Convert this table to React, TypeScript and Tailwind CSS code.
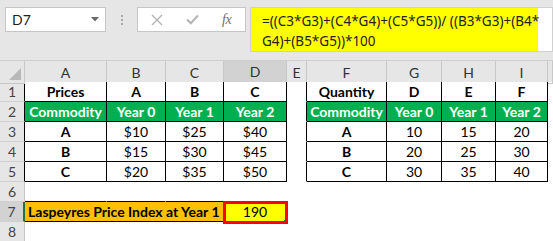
import React from 'react';

type Fill = 'green' | 'none';
type Cell = { text?: string; bold?: boolean; fill?: Fill };

const COLS = ['A', 'B', 'C', 'D', 'E', 'F', 'G', 'H', 'I', ''];

// sheet content, rows 1..8, columns A..I
const b = (text: string): Cell => ({ text, bold: true });
const g = (text: string): Cell => ({ text, bold: true, fill: 'green' });
const n = (text: string): Cell => ({ text });
const e: Cell = {};

const ROWS: Cell[][] = [
  [b('Prices'), b('A'), b('B'), b('C'), e, b('Quantity'), b('D'), b('E'), b('F')],
  [g('Commodity'), g('Year 0'), g('Year 1'), g('Year 2'), e, g('Commodity'), g('Year 0'), g('Year 1'), g('Year 2')],
  [b('A'), n('$10'), n('$25'), n('$40'), e, b('A'), n('10'), n('15'), n('20')],
  [b('B'), n('$15'), n('$30'), n('$45'), e, b('B'), n('20'), n('25'), n('30')],
  [b('C'), n('$20'), n('$35'), n('$50'), e, b('C'), n('30'), n('35'), n('40')],
  [e, e, e, e, e, e, e, e, e],
  [e, e, e, e, e, e, e, e, e],
  [e, e, e, e, e, e, e, e, e],
];

const inTable = (r: number, c: number) => {
  if (r >= 1 && r <= 5) return (c >= 0 && c <= 3) || (c >= 5 && c <= 8);
  if (r === 7) return c >= 0 && c <= 3;
  return false;
};

const GRID = 'grid grid-cols-[25px_82px_59px_58px_63px_20px_80px_55px_54px_52px_1fr]';

function FormulaBar() {
  return (
    <div className="h-[60px] bg-[#e6e6e6] flex items-start pt-[7px] pl-[5px] overflow-hidden">
      <div className="w-[101px] h-[25px] bg-white border border-[#c6c6c6] flex items-center pl-[6px] pr-[6px] text-[14px] text-[#222]">
        <span className="flex-1">D7</span>
        <svg width="8" height="5" viewBox="0 0 8 5"><path d="M0 0h8L4 4.5z" fill="#6a6a6a" /></svg>
      </div>
      <div className="w-[31px] h-[25px] flex flex-col items-center justify-center gap-[2px]">
        <div className="w-[2px] h-[2px] bg-[#a8a8a8]" />
        <div className="w-[2px] h-[2px] bg-[#a8a8a8]" />
        <div className="w-[2px] h-[2px] bg-[#a8a8a8]" />
      </div>
      <div className="w-[109px] h-[25px] bg-white border border-[#c6c6c6] flex items-center">
        <svg className="ml-[13px]" width="12" height="12" viewBox="0 0 12 12">
          <path d="M1 1l10 10M11 1L1 11" stroke="#b4b4b4" strokeWidth="1.4" />
        </svg>
        <svg className="ml-[23px]" width="13" height="11" viewBox="0 0 13 11">
          <path d="M1 5.5l3.8 3.8L12 1.5" stroke="#b4b4b4" strokeWidth="2" fill="none" />
        </svg>
        <span className="ml-[23px] text-[14px] italic text-[#707070] font-['Liberation_Serif',serif] tracking-[-0.5px]">fx</span>
      </div>
      <div className="ml-[4px] h-[45px] flex-1 bg-white border border-[#d0d0d0] flex">
        <div className="w-[287px] bg-[#ffff00] pl-[11px] pt-[3px] text-[13.5px] leading-[20px] text-[#222] font-['Noto_Sans',sans-serif] whitespace-nowrap">
          <div>=((C3*G3)+(C4*G4)+(C5*G5))/ ((B3*G3)+(B4*</div>
          <div>G4)+(B5*G5))*100</div>
        </div>
      </div>
    </div>
  );
}

function ColumnHeaders() {
  return (
    <div className={`${GRID} h-[22px] border-t border-[#cfcfcf] bg-[#e6e6e6] text-[14px] text-[#333]`}>
      <div className="relative border-r border-b border-r-[#c8c8c8] border-b-[#c8c8c8]">
        <svg className="absolute right-[3px] bottom-[3px]" width="12" height="12" viewBox="0 0 12 12">
          <path d="M12 0v12H0z" fill="#b8b8b8" />
        </svg>
      </div>
      {COLS.map((c, i) => {
        const selected = c === 'D';
        const tableCol = i <= 3 || (i >= 5 && i <= 8);
        return (
          <div
            key={i}
            className={`flex items-center justify-center border-r border-r-[#c8c8c8] ${
              selected
                ? 'bg-[#d2d2d2] border-b-2 border-b-[#217346]'
                : tableCol
                ? 'border-b border-b-black'
                : 'border-b border-b-[#c8c8c8]'
            }`}
          >
            {c}
          </div>
        );
      })}
    </div>
  );
}

function Sheet() {
  return (
    <div className={`${GRID} grid-rows-[repeat(8,20px)] text-[14px] font-['Lato',sans-serif] text-black`}>
      {ROWS.map((row, r0) => {
        const r = r0 + 1;
        const selectedRow = r === 7;
        const header = (
          <div
            key={`h${r}`}
            className={`flex items-center justify-center text-[#444] border-b border-b-[#d0d0d0] ${
              selectedRow
                ? 'bg-[#d2d2d2] border-r-2 border-r-[#217346]'
                : inTable(r, 0)
                ? 'bg-[#e6e6e6] border-r border-r-black'
                : 'bg-[#e6e6e6] border-r border-r-[#c8c8c8]'
            }`}
          >
            {r}
          </div>
        );

        if (r === 7) {
          return (
            <React.Fragment key={r}>
              {header}
              <div className="col-span-3 bg-[#ffc000] border-r border-b border-black flex items-center pl-[3px] font-bold whitespace-nowrap">
                Laspeyres Price Index at Year 1
              </div>
              <div className="relative bg-[#ffff00] border-r border-b border-black flex items-center justify-center">
                190
                <div className="absolute -left-[1px] -top-[1px] -right-[2px] -bottom-[3px] border-[3px] border-[#ff0000]" />
                <div className="absolute right-0 -bottom-[1px] w-[2px] h-[2px] bg-[#217346]" />
              </div>
              {Array.from({ length: 6 }).map((_, i) => (
                <div key={i} />
              ))}
            </React.Fragment>
          );
        }

        return (
          <React.Fragment key={r}>
            {header}
            {row.map((cell, c) => {
              const right = inTable(r, c) || inTable(r, c + 1);
              const bottom = inTable(r, c) || inTable(r + 1, c);
              return (
                <div
                  key={c}
                  className={`flex items-center justify-center whitespace-nowrap border-r border-b ${
                    right ? 'border-r-black' : 'border-r-transparent'
                  } ${bottom ? 'border-b-black' : 'border-b-transparent'} ${
                    cell.fill === 'green' ? 'bg-[#00b050] text-white' : 'bg-white'
                  } ${cell.bold ? 'font-bold' : ''}`}
                >
                  {cell.text}
                </div>
              );
            })}
            <div />
          </React.Fragment>
        );
      })}
    </div>
  );
}

export default function App() {
  return (
    <div className="w-[553px] h-[241px] overflow-hidden bg-white font-['Lato',sans-serif]">
      <FormulaBar />
      <ColumnHeaders />
      <Sheet />
    </div>
  );
}
